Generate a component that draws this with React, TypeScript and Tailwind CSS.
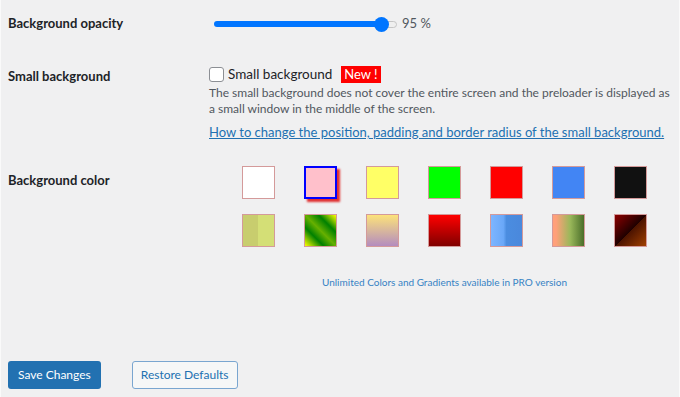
const SOLID_COLORS = ['#ffffff', '#ffc0cb', '#ffff66', '#00ff00', '#ff0000', '#4285f4', '#111111'];

const GRADIENTS = [
	'linear-gradient(to right, #c8cd6e 50%, #d4df76 50%)',
	'linear-gradient(45deg, #ffff00 0%, #008000 30%, #66b000 50%, #008000 72%, #ffff00 100%)',
	'linear-gradient(to bottom, #fce27a, #b48cbf)',
	'linear-gradient(to bottom, #ff0000, #800000)',
	'linear-gradient(to right, #7db5ff 0%, #6aa8f8 40%, #4b8de0 50%, #4a88dc 100%)',
	'linear-gradient(to right, #ffa07a 10%, #9ab85a 55%, #4a6e2a 100%)',
	'linear-gradient(135deg, #8b0000 0%, #200000 50%, #4a1200 50%, #a04000 100%)',
];

const font = { fontFamily: 'Lato, "Noto Sans", sans-serif' };

function Swatch({ bg, selected }: { bg: string; selected?: boolean }) {
	return (
		<div
			className={
				selected
					? 'w-[33px] h-[33px] border-2 border-[#0000ff] shadow-[3px_3px_2px_rgba(220,0,0,0.8)]'
					: 'w-[33px] h-[33px] border border-[#d49a9a]'
			}
			style={{ background: bg }}
		/>
	);
}

export default function App() {
	return (
		<div className="w-[680px] h-[397px] bg-[#f0f0f1] border-x border-[#fafafa] pl-[7px] text-[#1d2327] overflow-hidden" style={font}>
			{/* Background opacity */}
			<div className="flex items-center h-[48px]">
				<div className="w-[201px] shrink-0 text-[13px] font-bold">Background opacity</div>
				<div className="flex items-center ml-[5px]">
					<div className="w-[167px] h-[6px] bg-[#0075ff] rounded-l-full" />
					<div className="w-[15px] h-[15px] rounded-full bg-[#0075ff] -ml-[7px] relative z-10" />
					<div className="w-[15px] h-[7px] border border-[#c5c5c5] rounded-r-full bg-[#efefef] -ml-[7px]" />
					<span className="ml-[5px] text-[13px] text-[#50575e]">95 %</span>
				</div>
			</div>

			{/* Small background */}
			<div className="flex mt-[17px]">
				<div className="w-[201px] shrink-0 text-[13px] font-bold leading-[20px] pt-[1px]">Small background</div>
				<div className="flex flex-col">
					<div className="flex items-center h-[18px]">
						<div className="w-[15px] h-[15px] rounded-[3px] border border-[#8c8f94] bg-white" />
						<span className="ml-[4px] text-[13.5px]">Small background</span>
						<span className="ml-[9px] bg-[#ff0000] text-white text-[13px] leading-[17px] px-[3px]">New !</span>
					</div>
					<p className="mt-[2px] text-[12px] leading-[16px] text-[#50575e] whitespace-nowrap">
						The small background does not cover the entire screen and the preloader is displayed as
						<br />
						a small window in the middle of the screen.
					</p>
					<a className="mt-[7px] text-[13px] leading-[16px] text-[#2271b1] underline whitespace-nowrap">
						How to change the position, padding and border radius of the small background.
					</a>
				</div>
			</div>

			{/* Background color */}
			<div className="flex mt-[26px]">
				<div className="w-[201px] shrink-0 text-[13px] font-bold leading-[20px] pt-[4px]">Background color</div>
				<div className="flex flex-col ml-[33px]">
					<div className="grid grid-cols-7 gap-x-[29px] gap-y-[15px]">
						{SOLID_COLORS.map((c, i) => (
							<Swatch key={c} bg={c} selected={i === 1} />
						))}
						{GRADIENTS.map((g) => (
							<Swatch key={g} bg={g} />
						))}
					</div>
					<div className="mt-[28px] text-center text-[10px] text-[#3582c4]">
						Unlimited Colors and Gradients available in PRO version
					</div>
				</div>
			</div>

			{/* Buttons */}
			<div className="flex items-center gap-[31px] mt-[71px]">
				<button className="h-[28px] px-[10px] rounded-[3px] bg-[#2271b1] text-white text-[12px]">Save Changes</button>
				<button className="h-[28px] px-[8px] rounded-[3px] border border-[#7aa6d0] bg-[#f6f7f7] text-[#2271b1] text-[12px]">Restore Defaults</button>
			</div>
		</div>
	);
}
